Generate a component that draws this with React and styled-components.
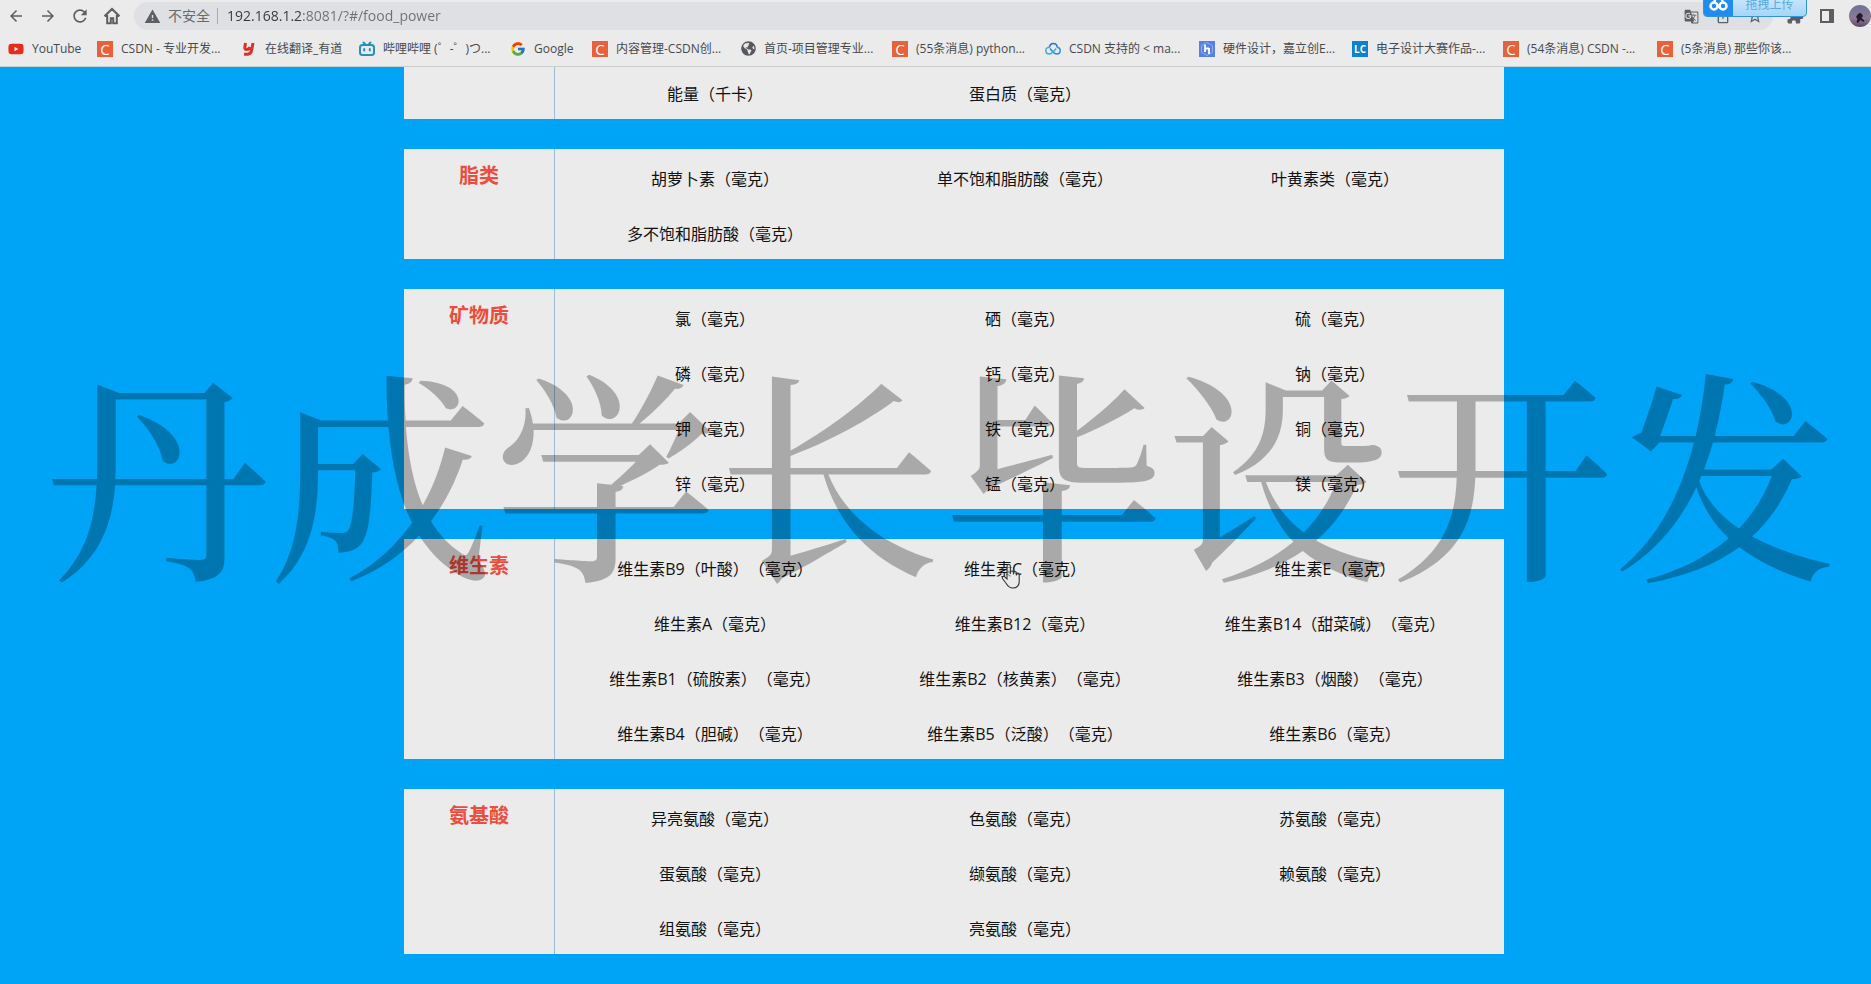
import styled, { createGlobalStyle } from "styled-components";
import {
  MdArrowBack,
  MdArrowForward,
  MdRefresh,
  MdWarning,
  MdGTranslate,
  MdIosShare,
  MdStarBorder,
  MdExtension,
} from "react-icons/md";
import { FcGoogle } from "react-icons/fc";
import { FaYoutube, FaGlobeAmericas } from "react-icons/fa";

const GlobalStyle = createGlobalStyle`
  * {
    box-sizing: border-box;
  }

  body {
    margin: 0;
    background-color: #00a4f6;
    font-family: "Open Sans", "Noto Sans CJK SC", sans-serif;
    text-spacing-trim: space-all;
    overflow-x: hidden;
  }
`;

const Page = styled.div`
  position: relative;
  min-height: 100vh;
  overflow: hidden;
`;

/* browser bar */

const Browser = styled.header`
  height: 67px;
  padding-top: 2px;
  background-color: #ebebec;
  border-bottom: 1px solid #cbced1;
`;

const Toolbar = styled.div`
  display: flex;
  align-items: center;
  height: 28px;
  padding-left: 6px;
`;

const NavButtons = styled.nav`
  display: flex;
  gap: 12px;
  margin-right: 12px;
`;

const IconButton = styled.button`
  display: flex;
  align-items: center;
  justify-content: center;
  flex: none;
  width: 20px;
  height: 20px;
  padding: 0;
  border: 0;
  background: none;
  color: #5b5e62;
  font-size: ${(props) => props.$size || 18}px;
`;

const AddressBar = styled.div`
  display: flex;
  align-items: center;
  flex: 1;
  height: 28px;
  padding: 0 8px 0 10px;
  border-radius: 14px;
  background-color: #dfe0e3;
`;

const Security = styled.button`
  display: flex;
  align-items: center;
  gap: 7px;
  height: 16px;
  padding: 0 7px 0 0;
  border: 0;
  border-right: 1px solid #a5a8ac;
  background: none;
  color: #66696d;
  font-family: inherit;
  font-size: 14px;
  line-height: 16px;

  svg {
    font-size: 17px;
    color: #5b5e62;
  }
`;

const AddressInput = styled.input`
  flex: 1;
  min-width: 0;
  padding: 0 0 0 9px;
  border: 0;
  outline: 0;
  color: #606367;
  background: linear-gradient(to right, #35383b 84px, #6c6f73 84px);
  background-clip: text;
  -webkit-text-fill-color: transparent;
  font-family: inherit;
  font-size: 14px;
  line-height: 20px;
`;

const AddressActions = styled.div`
  display: flex;
  gap: 12px;
`;

const ToolbarEnd = styled.div`
  display: flex;
  align-items: center;
  gap: 12px;
  padding-left: 12px;

  svg {
    flex: none;
  }
`;

const Bookmarks = styled.nav`
  display: flex;
  align-items: center;
  height: 37px;
  padding-left: 8px;
`;

const Bookmark = styled.a`
  display: flex;
  align-items: center;
  flex: none;
  gap: 8px;
  width: ${(props) => props.$width}px;
  color: #46494c;
  font-size: 12px;
  line-height: 16px;
  white-space: nowrap;
  text-decoration: none;

  svg {
    flex: none;
  }
`;

const Tile = styled.span`
  display: flex;
  align-items: center;
  justify-content: center;
  flex: none;
  width: 16px;
  height: 16px;
  background-color: ${(props) => props.$color};
  color: #fff;
  font-family: "Open Sans", sans-serif;
  font-size: ${(props) => props.$size || 15}px;
  font-weight: ${(props) => props.$weight || 400};
`;

const UploadButton = styled.button`
  position: absolute;
  top: -8px;
  right: 64px;
  display: flex;
  width: 104px;
  height: 25px;
  padding: 0;
  border: 1px solid #2f94e4;
  border-radius: 4px;
  overflow: hidden;
  background: linear-gradient(#d5ebfa, #a5d5f8);
  color: #58a8e4;
  font-family: inherit;
  font-size: 12px;
  line-height: 24px;

  svg {
    flex: none;
    background-color: #1f8df0;
  }

  span {
    flex: 1;
  }
`;

/* food page */

const Main = styled.main`
  display: flex;
  flex-direction: column;
  align-items: center;
  gap: 30px;
  padding: 0 0 30px 37px;
`;

const Card = styled.section`
  display: flex;
  width: 100%;
  max-width: 1100px;
  height: ${(props) => (props.$clipped ? "52px" : "auto")};
  overflow: hidden;
  background-color: #ebebeb;
`;

const CardTitle = styled.h2`
  flex: none;
  width: 151px;
  margin: 0;
  padding-top: 13px;
  border-right: 1px solid #9fb9d8;
  color: #ee4c3c;
  font-size: 20px;
  font-weight: bold;
  line-height: 28px;
  text-align: center;
`;

const Nutrients = styled.ul`
  flex: 1;
  display: grid;
  grid-template-columns: repeat(3, 1fr);
  grid-auto-rows: 55px;
  align-content: ${(props) => (props.$clipped ? "end" : "start")};
  margin: 0;
  padding: 0 14px 0 5px;
  list-style: none;
`;

const Nutrient = styled.li`
  position: relative;
  padding-top: 18px;
  color: #111;
  font-size: 16px;
  line-height: 24px;
  text-align: center;
  white-space: nowrap;
`;

const HandCursor = styled.svg`
  position: absolute;
  top: 24px;
  left: calc(50% - 24px);
`;

const Watermark = styled.div`
  position: absolute;
  top: 355px;
  left: 12px;
  right: 0;
  display: flex;
  justify-content: center;
  color: rgba(0, 0, 0, 0.28);
  font-family: "Noto Serif CJK SC", "Noto Sans CJK SC", serif;
  font-size: 224px;
  font-weight: 500;
  line-height: 224px;
  white-space: nowrap;
  pointer-events: none;
`;

function HomeIcon() {
  return (
    <svg width="18" height="18" viewBox="0 0 18 18" fill="none" stroke="#5b5e62" strokeWidth="2">
      <path d="M1.5 9.2 9 2l7.500 7.200M4.200 8v8.200h3.600v-5h2.400v5h3.600V8" />
    </svg>
  );
}

function YoudaoIcon() {
  return (
    <svg width="16" height="16" viewBox="0 0 16 16" fill="none" stroke="#d8332b" strokeWidth="3">
      <path d="M4.500 2 3.800 6.500q-.2 2 1.800 2 2.600 0 3.400-2.500M12 2l-1.300 7q-.8 4-4 4.200L3 13.300" />
    </svg>
  );
}

function BilibiliIcon() {
  return (
    <svg width="16" height="16" viewBox="0 0 16 16" fill="none" stroke="#2490c4" strokeWidth="2" strokeLinecap="round">
      <rect x="1" y="4" width="14" height="10" rx="2.500" />
      <path d="M4.500 1.500 6.500 3.500M11.500 1.500 9.500 3.500M5.200 8v1.500M10.800 8v1.500" />
    </svg>
  );
}

function CloudIcon() {
  return (
    <svg width="16" height="16" viewBox="0 0 16 16" fill="none" strokeWidth="1.500">
      <path d="M4.500 6C5 3.500 6.500 2.500 8.300 2.500c2.200 0 3.800 1.600 3.900 3.900" stroke="#2f6fd6" />
      <path d="M12.200 6.200c1.800.2 3 1.500 3 3.300 0 2-1.500 3.500-3.500 3.500-1.500 0-2.500-.7-3.700-2L5 7.500" stroke="#2a8fe8" />
      <path d="M5 6.200C2.500 6 .8 7.500.8 9.500s1.500 3.500 3.500 3.500c1.700 0 2.700-1 3.700-2l3.200-3.500" stroke="#37aee8" />
    </svg>
  );
}

function HardwareIcon() {
  return (
    <svg width="16" height="16" viewBox="0 0 16 16" fill="none">
      <rect width="16" height="16" fill="#5680e2" />
      <path d="M8 1.500 13.500 4.700v6.600L8 14.500 2.500 11.300V4.700z" stroke="#9db6ef" strokeWidth=".8" />
      <path d="M6 3.500v7.500M6 7.500h4M10 7v6" stroke="#fff" strokeWidth="1.800" />
    </svg>
  );
}

function SidePanelIcon() {
  return (
    <svg width="14" height="14" viewBox="0 0 14 14">
      <path d="M1 1h12v12H1z" fill="none" stroke="#5b5e62" strokeWidth="2" />
      <path d="M9 1h4v12H9z" fill="#5b5e62" />
    </svg>
  );
}

function Avatar() {
  return (
    <svg width="22" height="22" viewBox="0 0 22 22">
      <defs>
        <linearGradient id="sky" x1="0" y1="0" x2="0" y2="1">
          <stop offset="0" stopColor="#6e7298" />
          <stop offset=".6" stopColor="#8f7a96" />
          <stop offset="1" stopColor="#594a66" />
        </linearGradient>
      </defs>
      <circle cx="11" cy="11" r="11" fill="url(#sky)" />
      <path d="M8.500 9.500l2-1.500 2 .5 1.500 2.500-1.500 2 3 2.500-1 1.500-3-2-2.500 3-1.500-1 1-3-1.500-2z" fill="#241a28" />
    </svg>
  );
}

function UploadLogo() {
  return (
    <svg width="29" height="23" viewBox="0 0 29 23" fill="none" stroke="#fff" strokeWidth="2.500">
      <circle cx="10" cy="13" r="3.500" />
      <circle cx="19" cy="13" r="3.500" />
      <path d="M10.500 9a4 4 0 0 1 8 0M12.500 10.500l4 5" />
    </svg>
  );
}

const csdn = <Tile $color="#e8613a">C</Tile>;

const bookmarks = [
  { label: "YouTube", width: 89, icon: <FaYoutube size={16} color="#e62a1c" /> },
  { label: "CSDN - 专业开发...", width: 144, icon: csdn },
  { label: "在线翻译_有道", width: 118, icon: <YoudaoIcon /> },
  { label: "哔哩哔哩 (゜-゜)つ...", width: 151, icon: <BilibiliIcon /> },
  { label: "Google", width: 82, icon: <FcGoogle size={16} /> },
  { label: "内容管理-CSDN创...", width: 149, icon: csdn },
  { label: "首页-项目管理专业...", width: 151, icon: <FaGlobeAmericas size={15} color="#55585c" /> },
  { label: "(55条消息) python...", width: 153, icon: csdn },
  { label: "CSDN 支持的 < ma...", width: 154, icon: <CloudIcon /> },
  { label: "硬件设计，嘉立创E...", width: 153, icon: <HardwareIcon /> },
  {
    label: "电子设计大赛作品-...",
    width: 151,
    icon: (
      <Tile $color="#0d82cf" $size={10} $weight={700}>
        LC
      </Tile>
    ),
  },
  { label: "(54条消息) CSDN -...", width: 154, icon: csdn },
  { label: "(5条消息) 那些你该...", width: 154, icon: csdn },
];

const categories = [
  { title: "", clipped: true, items: ["能量（千卡）", "蛋白质（毫克）"] },
  {
    title: "脂类",
    items: ["胡萝卜素（毫克）", "单不饱和脂肪酸（毫克）", "叶黄素类（毫克）", "多不饱和脂肪酸（毫克）"],
  },
  {
    title: "矿物质",
    items: ["氯", "硒", "硫", "磷", "钙", "钠", "钾", "铁", "铜", "锌", "锰", "镁"].map(
      (name) => `${name}（毫克）`
    ),
  },
  {
    title: "维生素",
    items: [
      "维生素B9（叶酸）（毫克）",
      "维生素C（毫克）",
      "维生素E（毫克）",
      "维生素A（毫克）",
      "维生素B12（毫克）",
      "维生素B14（甜菜碱）（毫克）",
      "维生素B1（硫胺素）（毫克）",
      "维生素B2（核黄素）（毫克）",
      "维生素B3（烟酸）（毫克）",
      "维生素B4（胆碱）（毫克）",
      "维生素B5（泛酸）（毫克）",
      "维生素B6（毫克）",
    ],
  },
  {
    title: "氨基酸",
    items: ["异亮", "色", "苏", "蛋", "缬", "赖", "组", "亮"].map((name) => `${name}氨酸（毫克）`),
  },
];

const hovered = "维生素C（毫克）";

function BrowserBar() {
  return (
    <Browser>
      <Toolbar>
        <NavButtons>
          <IconButton aria-label="后退">
            <MdArrowBack />
          </IconButton>
          <IconButton aria-label="前进">
            <MdArrowForward />
          </IconButton>
          <IconButton aria-label="刷新" $size={20}>
            <MdRefresh />
          </IconButton>
          <IconButton aria-label="主页">
            <HomeIcon />
          </IconButton>
        </NavButtons>
        <AddressBar>
          <Security>
            <MdWarning />
            不安全
          </Security>
          <AddressInput aria-label="地址" defaultValue="192.168.1.2:8081/?#/food_power" />
          <AddressActions>
            <IconButton aria-label="翻译" $size={15}>
              <MdGTranslate />
            </IconButton>
            <IconButton aria-label="分享" $size={16}>
              <MdIosShare />
            </IconButton>
            <IconButton aria-label="收藏">
              <MdStarBorder />
            </IconButton>
          </AddressActions>
        </AddressBar>
        <ToolbarEnd>
          <IconButton aria-label="扩展程序">
            <MdExtension />
          </IconButton>
          <IconButton aria-label="侧边栏">
            <SidePanelIcon />
          </IconButton>
          <Avatar />
        </ToolbarEnd>
      </Toolbar>
      <Bookmarks>
        {bookmarks.map((b) => (
          <Bookmark key={b.label} href="#" $width={b.width}>
            {b.icon}
            {b.label}
          </Bookmark>
        ))}
      </Bookmarks>
      <UploadButton>
        <UploadLogo />
        <span>拖拽上传</span>
      </UploadButton>
    </Browser>
  );
}

function Category({ category }) {
  return (
    <Card $clipped={category.clipped}>
      <CardTitle>{category.title}</CardTitle>
      <Nutrients $clipped={category.clipped}>
        {category.items.map((item) => (
          <Nutrient key={item}>
            {item}
            {item === hovered && (
              <HandCursor width="20" height="26" viewBox="0 0 20 26" fill="#ebebeb" fillOpacity=".6" stroke="#333" strokeWidth="1.100">
                <path d="M6 16V3.200a1.700 1.700 0 0 1 3.400 0V11V9a1.600 1.600 0 0 1 3 0v2.500V10a1.500 1.500 0 0 1 3 0v2.500V11.500a1.400 1.400 0 0 1 2.800 0V18c0 4-2 7-6.500 7-3.500 0-5-2-6.500-4.500L1.500 15.500c-.8-1.600 1-2.800 2.300-1.600z" />
              </HandCursor>
            )}
          </Nutrient>
        ))}
      </Nutrients>
    </Card>
  );
}

function App() {
  return (
    <Page>
      <GlobalStyle />
      <BrowserBar />
      <Main>
        {categories.map((category, i) => (
          <Category key={i} category={category} />
        ))}
      </Main>
      <Watermark>丹成学长毕设开发</Watermark>
    </Page>
  );
}

export default App;
